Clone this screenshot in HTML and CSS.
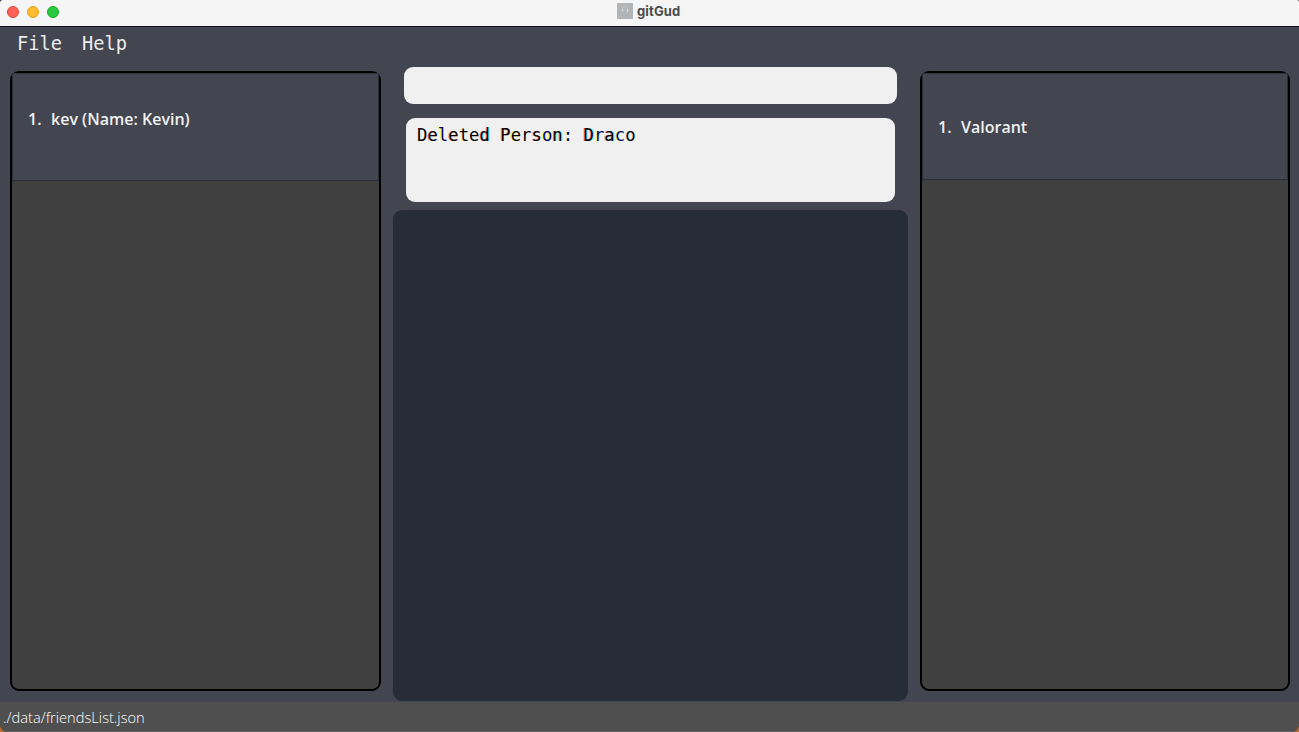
FILE: index.html
```html
<!DOCTYPE html>
<html lang="en">
<head>
<meta charset="utf-8">
<title>gitGud</title>
<link rel="stylesheet" href="styles.css">
</head>
<body>
<div class="window">
  <header class="titlebar">
    <div class="lights"><i class="light close"></i><i class="light minimize"></i><i class="light maximize"></i></div>
    <div class="title">
      <svg class="app-icon" width="16" height="16" viewBox="0 0 16 16"><rect width="16" height="16" fill="#b2b4b6"/><path d="M5 8V6.5a3 3 0 0 1 6 0V8M10.5 9L9 10" fill="none" stroke="#c5cacd" stroke-width=".8"/><path d="M5.5 6.5v2M10.5 6.5v2" stroke="#e0e3e5"/><path d="M5 12.5h6" stroke="#a9b5bf" stroke-width=".8"/></svg>
      <span class="title-text">gitGud</span>
    </div>
  </header>
  <nav class="menu"><span>File</span><span>Help</span></nav>
  <main class="content">
    <section class="panel friends"><div class="cell"><span class="num">1.</span><span class="name">kev (Name: Kevin)</span></div></section>
    <section class="center">
      <div class="command"></div>
      <div class="result">D<span class="r">e</span><span class="b">l</span><span class="r">e</span><span class="y">t</span>e<span class="rc">d</span> <span class="r">P</span><span class="y">e</span>r<span class="r">s</span><span class="b">o</span><span class="rc">n</span><span class="b">:</span> <span class="rc">D</span><span class="b">r</span><span class="rc">a</span><span class="b">c</span>o</div>
      <div class="details"></div>
    </section>
    <section class="panel games"><div class="cell"><span class="num">1.</span><span class="name">Valorant</span></div></section>
  </main>
  <footer class="status"><span class="path">./data/friendsList.json</span></footer>
</div>
</body>
</html>
```
FILE: styles.css
```css
* { box-sizing: border-box; }
body { margin: 0; background: linear-gradient(#333 0 50%, #b96a2b 50%); }
.window {
  width: 1299px; height: 732px; display: flex; flex-direction: column;
  background: #434650; border-radius: 3px 2px 8px 8px; overflow: hidden;
}
.titlebar {
  height: 27px; flex: none; background: #f5f5f5; border-bottom: 1px solid #0c0e20;
  display: grid; grid-template-columns: 617px 1fr;
}
.lights { display: flex; gap: 8px; padding: 6px 0 0 7px; }
.light { width: 12px; height: 12px; border-radius: 50%; border: 1px solid; }
.close { background: #ff5f57; border-color: #e2463f; }
.minimize { background: #febc2e; border-color: #e1a116; }
.maximize { background: #28c840; border-color: #16ac29; }
.title { display: flex; gap: 4px; padding-top: 3px; }
.title-text { font: 700 13px/17px Inter, sans-serif; letter-spacing: .15px; color: #4a4a4a; }
.menu {
  height: 40px; flex: none; display: flex; gap: 20px; padding: 5px 0 0 17px;
  font: 18.7px/24px "DejaVu Sans Mono", monospace; color: #ececec;
}
.content {
  height: 635px; flex: none; display: grid; align-items: start;
  grid-template-columns: 371px 515px 370px; column-gap: 12px; padding-left: 10px;
}
.panel {
  height: 620px; margin-top: 4px; border: 2px solid #000; border-radius: 9px; background: #404040;
}
.cell {
  display: flex; background: #434650; border: 1px solid #2a2e39; border-top-color: #30333d;
  padding: 33px 0 0 15px; font: 600 16px/24px "Open Sans", sans-serif; color: #f0f0f0;
}
.friends .cell { height: 108px; }
.games .cell { height: 107px; padding-top: 41px; }
.num { width: 23px; flex: none; }
.name { white-space: nowrap; }
.center { display: flex; flex-direction: column; }
.command { height: 37px; margin: 0 11px; border-radius: 9px; background: #f0f0f0; }
.result {
  height: 84px; margin: 14px 13px 8px; padding: 5px 11px; border-radius: 9px; background: #f0f0f0;
  font: 17.27px/24px "DejaVu Sans Mono", monospace; color: #000; white-space: pre;
}
.r { text-shadow: -1px 0 #ff000070; }
.rc { text-shadow: -1px 0 #ff000070, 1px 0 #00ffffa0; }
.y { text-shadow: -1px 0 #ffff00d0; }
.b { color: #000080; text-shadow: -1px 0 #ffff00c0; }
.details { height: 491px; border-radius: 9px; background: #262c38; }
.status {
  height: 30px; flex: none; background: #4f4f4f; border-bottom: 1px solid #666;
  padding: 3px 0 0 3px; font: 300 14.67px/24px "Open Sans", sans-serif; color: #fff;
}
```
